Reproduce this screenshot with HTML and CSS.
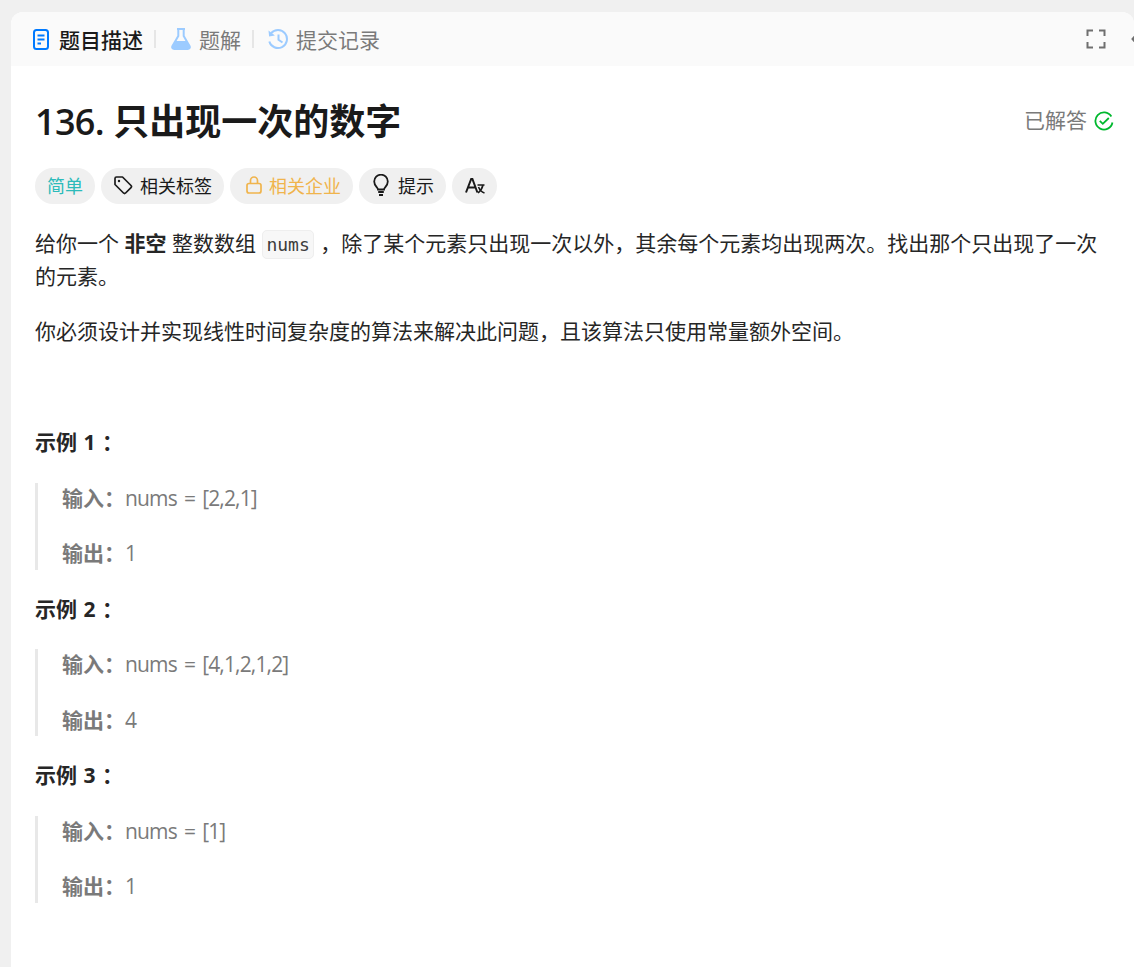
FILE: index.html
```html
<!DOCTYPE html>
<html lang="zh-CN">
<head>
<meta charset="utf-8">
<title>136. 只出现一次的数字</title>
<link rel="stylesheet" href="styles.css">
</head>
<body>
<main class="card">
  <header class="tabs">
    <div class="tab tab-active">
      <svg class="tab-icon" viewBox="0 0 16 21" width="16" height="21"><rect x="1" y="1" width="14" height="19" rx="2.5" fill="none" stroke="#007aff" stroke-width="2"/><path d="M4.5 6.5h7M4.5 10.5h7M4.5 14.5h3.5" stroke="#007aff" stroke-width="1.8" fill="none"/></svg>
      <span class="tab-label">题目描述</span>
    </div>
    <span class="sep"></span>
    <div class="tab">
      <svg class="tab-icon" viewBox="0 0 20 22" width="20" height="22"><path d="M6 1h8M7.3 1v7L1.5 18c-.8 1.600 0 3 1.800 3h13.400c1.800 0 2.600-1.400 1.800-3L12.700 8V1" fill="none" stroke="#9ccbff" stroke-width="2"/><path d="M4.600 13h10.800l3 5.200c.8 1.400 0 2.800-1.700 2.800H3.300c-1.700 0-2.500-1.400-1.700-2.800z" fill="#9ccbff"/></svg>
      <span>题解</span>
    </div>
    <span class="sep sep-second"></span>
    <div class="tab tab-history">
      <svg class="tab-icon" viewBox="0 0 22 22" width="22" height="22"><path d="M4.100 5.200A9 9 0 1 1 2.300 13.500" fill="none" stroke="#9ccbff" stroke-width="2"/><path d="M1.500 2.500l.6 6 5.800-.9z" fill="#9ccbff"/><path d="M11.500 6.500v5.200l4 2.800" fill="none" stroke="#9ccbff" stroke-width="2"/></svg>
      <span>提交记录</span>
    </div>
    <div class="tabs-right">
      <svg class="tool-icon" viewBox="0 0 20 20" width="20" height="20"><path d="M1.500 7V1.500H7M13 1.500h5.500V7M18.500 13v5.500H13M7 18.500H1.500V13" fill="none" stroke="#6f6f6f" stroke-width="2"/></svg>
      <svg class="tool-icon" viewBox="0 0 12 12" width="12" height="12"><path d="M5 2L1.500 6 5 10M2 6h10" fill="none" stroke="#6f6f6f" stroke-width="2"/></svg>
    </div>
  </header>
  <article class="content">
    <div class="title-row">
      <h1 class="title"><span class="title-num">136.</span> 只出现一次的数字</h1>
      <div class="solved">
        <span>已解答</span>
        <svg viewBox="0 0 20 20" width="20" height="20"><path d="M16.500 4.300A8.600 8.600 0 1 0 18.600 10" fill="none" stroke="#00b82e" stroke-width="1.800" transform="rotate(10 10 10)"/><path d="M5.800 9.800l3 3 6-5.800" fill="none" stroke="#00b82e" stroke-width="1.800"/></svg>
      </div>
    </div>
    <div class="tags">
      <span class="tag tag-easy">简单</span>
      <span class="tag">
        <svg viewBox="0 0 20 20" width="20" height="20"><path d="M2 3.500A1.500 1.500 0 0 1 3.500 2h6L18 10.500a1.500 1.500 0 0 1 0 2.100L12.600 18a1.500 1.500 0 0 1-2.100 0L2 9.500z" fill="none" stroke="#1a1a1a" stroke-width="1.700" stroke-linejoin="round"/><circle cx="6" cy="6" r="1.200" fill="#1a1a1a"/></svg>
        相关标签
      </span>
      <span class="tag tag-locked">
        <svg viewBox="0 0 16 18" width="16" height="18"><rect x="1" y="7.500" width="14" height="9.500" rx="2" fill="none" stroke="#f0b44c" stroke-width="1.700"/><path d="M4.500 7.500V4.500a3.500 3.500 0 0 1 7 0v3" fill="none" stroke="#f0b44c" stroke-width="1.700"/></svg>
        相关企业
      </span>
      <span class="tag tag-hint">
        <svg viewBox="0 0 16 22" width="16" height="22"><path d="M5 15.500c0-2-3.800-3.500-3.800-8a6.800 6.800 0 0 1 13.600 0c0 4.500-3.800 6-3.800 8z" fill="none" stroke="#1a1a1a" stroke-width="1.800"/><path d="M5.200 18h5.600M6 21h4" stroke="#1a1a1a" stroke-width="2" fill="none"/></svg>
        提示
      </span>
      <span class="tag tag-lang">
        <svg viewBox="0 0 20 18" width="20" height="18"><path d="M1 15.500L6.200 2h1.200l5 13.500M3 10.500h8" fill="none" stroke="#1a1a1a" stroke-width="2"/><path d="M12.500 8h7M18 8c-.8 3.500-2.600 6-5 8M13.500 10c1 2.500 3 5 6 6" fill="none" stroke="#1a1a1a" stroke-width="1.600"/></svg>
      </span>
    </div>
    <div class="desc">
      <p>给你一个 <strong>非空</strong> 整数数组 <code>nums</code> ，除了某个元素只出现一次以外，其余每个元素均出现两次。找出那个只出现了一次的元素。</p>
      <p>你必须设计并实现线性时间复杂度的算法来解决此问题，且该算法只使用常量额外空间。</p>
      <p>&nbsp;</p>
      <p><strong class="example">示例 1 ：</strong></p>
      <blockquote>
        <p><strong>输入：</strong><span class="value">nums = [2,2,1]</span></p>
        <p><strong>输出：</strong>1</p>
      </blockquote>
      <p><strong class="example">示例 2 ：</strong></p>
      <blockquote>
        <p><strong>输入：</strong><span class="value">nums = [4,1,2,1,2]</span></p>
        <p><strong>输出：</strong>4</p>
      </blockquote>
      <p><strong class="example">示例 3 ：</strong></p>
      <blockquote>
        <p><strong>输入：</strong><span class="value">nums = [1]</span></p>
        <p><strong>输出：</strong>1</p>
      </blockquote>
    </div>
  </article>
</main>
</body>
</html>
```
FILE: styles.css
```css
* { box-sizing: border-box; }
html, body { margin: 0; height: 100%; overflow: hidden; }
body {
  background: #f0f0f0;
  font-family: "Open Sans", "Noto Sans CJK SC", sans-serif;
  color: #262626;
  padding: 12px 0 0 11px;
}
.card {
  background: #fff;
  border-radius: 12px 12px 0 0;
  height: 955px;
  overflow: hidden;
}
.tabs {
  height: 54px;
  background: #fafafa;
  display: flex;
  align-items: center;
  padding-left: 22px;
  font-size: 21px;
  color: #7a7a7a;
}
.tab { display: flex; align-items: center; gap: 8px; }
.tab-active { color: #1a1a1a; font-weight: 500; gap: 10px; }
.tab-history { gap: 7px; }
.tab-icon { flex: none; }
.sep { width: 2px; height: 18px; background: #e6e6e6; margin: 0 15px 0 11px; }
.sep-second { margin-right: 13px; }
.tabs-right { margin-left: auto; display: flex; gap: 25px; align-items: center; flex: none; width: 48px; overflow: hidden; }
.tool-icon { flex: none; }
.content { padding: 0 20px 0 24px; }
.title-row {
  display: flex;
  align-items: center;
  justify-content: space-between;
  height: 56px;
  margin-top: 28px;
}
.title {
  margin: 0;
  font-size: 36px;
  font-weight: 600;
  color: #1a1a1a;
  line-height: 56px;
}
.title-num { letter-spacing: -0.7px; }
.solved { display: flex; align-items: center; gap: 7px; font-size: 21px; color: #7a7a7a; }
.solved span { line-height: 26px; margin-top: -4px; }
.solved svg { margin-top: -2px; }
.tags { display: flex; gap: 6px; margin-top: 18px; }
.tag {
  height: 36px;
  border-radius: 18px;
  background: #f0f0f0;
  display: inline-flex;
  align-items: center;
  gap: 7px;
  padding: 0 12px 2px;
  font-size: 18px;
  color: #1a1a1a;
}
.tag svg { flex: none; }
.tag-easy { color: #2cbbba; }
.tag-locked { color: #f0b44c; padding-left: 16px; }
.tag-hint { padding-left: 14px; gap: 9px; }
.tag-lang { padding: 0 12px 0 13px; }
.desc { font-size: 21px; line-height: 31.5px; margin-top: 24px; color: #262626; }
.desc p { margin: 0 0 24px; }
.desc strong { font-weight: 700; }
.example { word-spacing: 1px; }
.value { letter-spacing: -0.85px; word-spacing: 2.5px; }
code {
  font-family: "DejaVu Sans Mono", monospace;
  font-size: 18px;
  color: #3c3c3c;
  background: #f7f7f7;
  border: 1px solid #eee;
  border-radius: 5px;
  padding: 3px 3.5px;
  margin: 0 0.5px;
}
blockquote {
  margin: 0 0 24px;
  border-left: 3px solid #e8e8e8;
  padding-left: 24px;
  color: #7a7a7a;
}
blockquote p:last-child { margin-bottom: 0; }
```
